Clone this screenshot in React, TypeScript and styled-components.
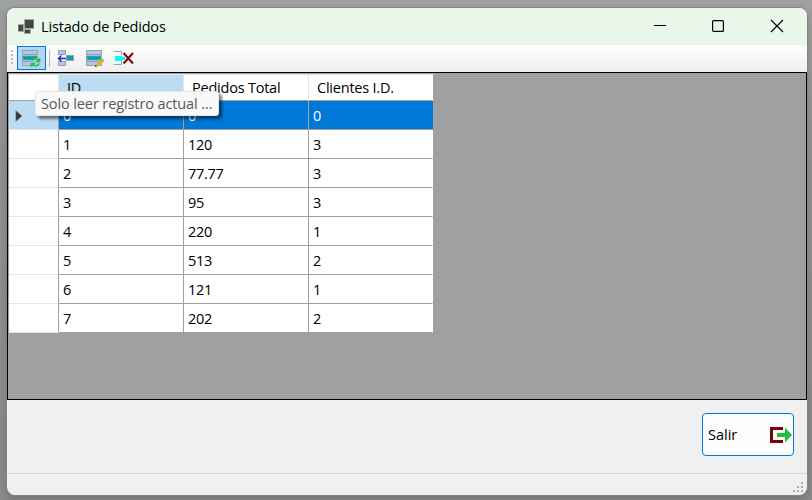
import React from 'react';
import styled, { createGlobalStyle } from 'styled-components';

const GlobalStyle = createGlobalStyle`
  * { box-sizing: border-box; }
  html, body { margin: 0; height: 500px; overflow: hidden; }
  body { font-family: "Open Sans", "Noto Sans", sans-serif; font-size: 14.5px; color: #000; }
  svg { display: block; overflow: visible; }
`;

const Desktop = styled.div`
  width: 812px;
  height: 500px;
  padding: 8px 5px 5px 7px;
  background: linear-gradient(#a0a0a0, #919191 30%, #898989);
  overflow: hidden;
`;

const WindowFrame = styled.main`
  position: relative;
  display: flex;
  flex-direction: column;
  width: 800px;
  height: 487px;
  border-radius: 8px;
  overflow: hidden;
  background: #f0f0f0;
  box-shadow: 0 0 0 1px #858585, 0 3px 8px rgba(0, 0, 0, 0.2);
`;

const TitleBar = styled.header`
  display: flex;
  align-items: center;
  height: 37px;
  flex: none;
  background: #e9f7ea;
  padding: 0 1px 0 11px;
`;

const Title = styled.h1`
  margin: 0 auto 0 7px;
  font-size: 14.5px;
  font-weight: 400;
  line-height: 20px;
  letter-spacing: -0.15px;
  white-space: nowrap;
`;

const CaptionButton = styled.button`
  display: grid;
  place-items: center;
  width: 58.5px;
  height: 37px;
  padding: 0 0 2px;
  border: 0;
  background: none;
`;

const Toolbar = styled.nav`
  display: flex;
  align-items: center;
  flex: none;
  height: 27px;
  padding: 0 0 1px 4px;
  background: linear-gradient(#fdfdfd, #efefef);
`;

const ToolButton = styled.button<{ $active?: boolean }>`
  display: grid;
  place-items: center;
  width: 29px;
  height: 24px;
  padding: 0;
  border: 1px solid ${p => (p.$active ? '#0078d7' : 'transparent')};
  background: ${p => (p.$active ? '#b3d7f3' : 'none')};
`;

const Separator = styled.div`
  width: 1px;
  height: 17px;
  margin: 0 1px 0 3px;
  background: #bdbdbd;
`;

const GridPanel = styled.section`
  flex: none;
  height: 328px;
  border: 1px solid #000;
  padding: 1px;
  background: #a0a0a0;
`;

const Grid = styled.div`
  display: grid;
  grid-template-columns: 50px 125px 125px 124px;
  grid-template-rows: 27px repeat(8, 29px);
  width: 424px;
`;

const HeaderCell = styled.div<{ $hot?: boolean; $last?: boolean }>`
  padding: 3px 0 0 8px;
  line-height: 20px;
  letter-spacing: -0.22px;
  white-space: nowrap;
  border-top: 1px solid #e5e5e5;
  border-right: 1px solid ${p => (p.$last ? '#fff' : '#e5e5e5')};
  border-bottom: 1px solid #a0a0a0;
  background: ${p => (p.$hot ? '#bcdcf4' : '#fff')};
`;

const RowHeader = styled.div<{ $selected?: boolean }>`
  display: flex;
  align-items: center;
  padding: 2px 0 0 6px;
  border-right: 1px solid #a0a0a0;
  border-bottom: 1px solid #e5e5e5;
  background: ${p => (p.$selected ? '#bcdcf4' : '#fff')};
`;

const Cell = styled.div<{ $selected?: boolean; $last?: boolean }>`
  padding: 5px 0 0 4px;
  line-height: 20px;
  letter-spacing: -0.3px;
  border-right: 1px solid ${p => (p.$last ? (p.$selected ? '#0078d7' : '#fff') : '#a0a0a0')};
  border-bottom: 1px solid #a0a0a0;
  background: ${p => (p.$selected ? '#0078d7' : '#fff')};
  color: ${p => (p.$selected ? '#fff' : '#000')};
`;

const Tooltip = styled.div`
  position: absolute;
  left: 28px;
  top: 83px;
  width: 184px;
  height: 25px;
  padding: 2px 0 0 5px;
  border: 1px solid #e5e5e5;
  border-radius: 3px;
  background: #f9f9f9;
  color: #575757;
  line-height: 20px;
  letter-spacing: -0.11px;
  white-space: nowrap;
  box-shadow: 3px 3px 3px rgba(0, 0, 0, 0.5);
`;

const Actions = styled.section`
  display: flex;
  justify-content: flex-end;
  flex: none;
  height: 73px;
  padding: 13px 13px 0 0;
`;

const ExitButton = styled.button`
  display: flex;
  align-items: center;
  justify-content: space-between;
  width: 92px;
  height: 43px;
  padding: 0 1px 0 5px;
  border: 1px solid #0078d4;
  border-radius: 4px;
  background: #fdfdfd;
  color: #000;
  font: inherit;
  letter-spacing: 0;
`;

const StatusBar = styled.footer`
  display: flex;
  align-items: flex-end;
  justify-content: flex-end;
  flex: 1;
  padding: 0 2px 2px 0;
  border-top: 1px solid #d7d7d7;
`;

const AppIcon = () => (
  <svg width="16" height="16" viewBox="0 0 16 16">
    <path fill="#a5aca6" d="M6 0h10v10H6zM0 5h6v8H0zM6 10h7v5H6z" />
    <path fill="#444" d="M7 1h8.5v8H7zM.5 6H5v6H.5zM7 11h5v3H7z" />
  </svg>
);

const TableRows = () => (
  <g shapeRendering="crispEdges">
    <path fill="#a0a0a0" d="M0 0h16v16H0z" />
    <path fill="#a9c9ef" d="M1 1h14v3H1zM1 12h14v3H1z" />
    <path fill="#b5babd" d="M0 5h16v1H0zM0 10h16v1H0z" />
    <path fill="#18a8bf" d="M1 6h14v4H1z" />
    <path fill="#0799b1" d="M2 7h12v2H2z" />
  </g>
);

const RefreshRowIcon = () => (
  <svg width="19" height="16" viewBox="0 0 19 16">
    <TableRows />
    <circle cx="13.5" cy="12.5" r="4.5" fill="#b3d7f3" opacity="0.65" />
    <path d="M10 11c1-3 5-3 7 0M17.5 8v3.5H14M17 13.5c-1 3-5 3-7 .5M9.5 17v-3.5H13" fill="none" stroke="#27bd4b" strokeWidth="1.7" />
  </svg>
);

const InsertRowIcon = () => (
  <svg width="15" height="16" viewBox="0 0 15 16" shapeRendering="crispEdges">
    <path fill="#a0a0a0" d="M0 0h8v5H0zM0 11h8v5H0zM8 5h8v6H8z" />
    <path fill="#a9c9ef" d="M1 1h6v3H1zM1 12h6v3H1z" />
    <path fill="#00a2bb" d="M9 6h6v4H9z" />
    <path d="M8 8.5H0M3.5 5.5l-3 3 3 3" fill="none" stroke="#2020bc" strokeWidth="1.3" shapeRendering="auto" />
  </svg>
);

const EditRowIcon = () => (
  <svg width="17" height="16" viewBox="0 0 17 16">
    <TableRows />
    <path d="M10 16l1-3 4-4 3 2-4 4-3 1.5z" fill="#dfb51d" />
    <path d="M14.5 9.5L16 8.5l2.2 2-1.2 1.5z" fill="#c49a68" />
    <path d="M9 15.5h1.5v1.2H9z" fill="#151515" />
  </svg>
);

const DeleteRowIcon = () => (
  <svg width="19" height="16" viewBox="0 0 19 16">
    <path d="M0 1.5h7.5V5M0 14.5h7.5V11" fill="none" stroke="#a0a0a0" />
    <path d="M1 6h7v1h3v3H8v1H1z" fill="#00ffff" />
    <path d="M9.5 3l9.5 10.5M19 3L9.5 13.5" stroke="#800000" strokeWidth="1.9" fill="none" />
  </svg>
);

const Gripper = () => (
  <svg width="6" height="16" viewBox="0 0 6 16" shapeRendering="crispEdges">
    <path d="M0 0h2v2H0zM0 4h2v2H0zM0 8h2v2H0zM0 12h2v2H0z" fill="#bebebe" />
  </svg>
);

const CurrentRowIcon = () => (
  <svg width="8" height="12" viewBox="0 0 8 12">
    <path d="M.8 .5L7 6 .8 11.5z" fill="#333" stroke="#8e9aa3" strokeWidth=".6" />
  </svg>
);

const ExitIcon = () => (
  <svg width="22" height="16" viewBox="0 0 22 16">
    <path d="M13 1.5H1.5v13H13" fill="none" stroke="#800000" strokeWidth="3" />
    <path d="M7 6h8V.5L22 8l-7 7.5V10H7z" fill="#22be43" />
  </svg>
);

const ResizeGrip = () => (
  <svg width="12" height="11" viewBox="0 0 12 11" shapeRendering="crispEdges">
    <path d="M8 0h2v2H8zM4 4h2v2H4zM8 4h2v2H8zM0 8h2v2H0zM4 8h2v2H4zM8 8h2v2H8z" fill="#aaa" />
  </svg>
);

const headers = ['ID', 'Pedidos Total', 'Clientes I.D.'];
const rows = [
  ['0', '0', '0'],
  ['1', '120', '3'],
  ['2', '77.77', '3'],
  ['3', '95', '3'],
  ['4', '220', '1'],
  ['5', '513', '2'],
  ['6', '121', '1'],
  ['7', '202', '2'],
];

export default function App() {
  return (
    <Desktop>
      <GlobalStyle />
      <WindowFrame>
        <TitleBar>
          <AppIcon />
          <Title>Listado de Pedidos</Title>
          <CaptionButton aria-label="Minimizar">
            <svg width="12" height="12" shapeRendering="crispEdges"><path d="M0 5h12v1H0z" fill="#000" /></svg>
          </CaptionButton>
          <CaptionButton aria-label="Maximizar">
            <svg width="12" height="12"><rect x=".6" y=".6" width="10.8" height="10.8" rx="1" fill="none" stroke="#000" strokeWidth="1.2" /></svg>
          </CaptionButton>
          <CaptionButton aria-label="Cerrar">
            <svg width="12" height="12"><path d="M0 0l12 12M12 0L0 12" stroke="#000" strokeWidth="1.1" /></svg>
          </CaptionButton>
        </TitleBar>
        <Toolbar>
          <Gripper />
          <ToolButton $active><RefreshRowIcon /></ToolButton>
          <Separator />
          <ToolButton><InsertRowIcon /></ToolButton>
          <ToolButton><EditRowIcon /></ToolButton>
          <ToolButton><DeleteRowIcon /></ToolButton>
        </Toolbar>
        <GridPanel>
          <Grid>
            <HeaderCell />
            {headers.map((label, i) => (
              <HeaderCell key={label} $hot={i === 0} $last={i === 2}>{label}</HeaderCell>
            ))}
            {rows.map((row, r) => (
              <React.Fragment key={r}>
                <RowHeader $selected={r === 0}>{r === 0 && <CurrentRowIcon />}</RowHeader>
                {row.map((value, c) => (
                  <Cell key={c} $selected={r === 0} $last={c === 2}>{value}</Cell>
                ))}
              </React.Fragment>
            ))}
          </Grid>
        </GridPanel>
        <Actions>
          <ExitButton>Salir<ExitIcon /></ExitButton>
        </Actions>
        <StatusBar><ResizeGrip /></StatusBar>
        <Tooltip role="tooltip">Solo leer registro actual ...</Tooltip>
      </WindowFrame>
    </Desktop>
  );
}
